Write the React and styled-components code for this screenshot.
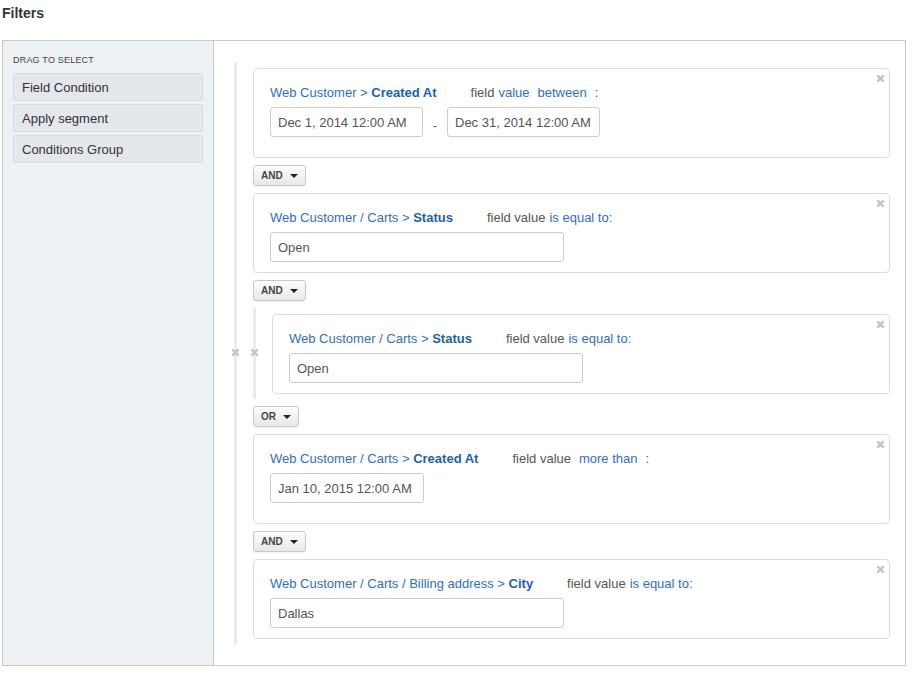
import React from "react";
import styled, { createGlobalStyle } from "styled-components";

const GlobalStyle = createGlobalStyle`
  body {
    margin: 0;
    font-family: "Liberation Sans", Arial, sans-serif;
    color: #333;
    background: #fff;
  }
`;

const Page = styled.div`
  padding: 0 8px 0 2px;
`;

const Title = styled.h3`
  margin: 0;
  padding-top: 5px;
  height: 35px;
  font-size: 14px;
  font-weight: bold;
  color: #333;
`;

const Frame = styled.div`
  display: flex;
  width: 904px;
  height: 626px;
  box-sizing: border-box;
  border: 1px solid #c8c8c8;
`;

const Sidebar = styled.div`
  width: 211px;
  flex-shrink: 0;
  background: #eef1f4;
  border-right: 1px solid #c8c8c8;
  padding: 14px 10px 0 10px;
  box-sizing: border-box;
  display: flex;
  flex-direction: column;
  gap: 3px;
`;

const SideCaption = styled.div`
  font-size: 9px;
  color: #444;
  letter-spacing: 0.2px;
  margin-bottom: 5px;
`;

const SideItem = styled.div`
  height: 28px;
  box-sizing: border-box;
  background: #e4e7eb;
  border: 1px solid #d6d9dd;
  border-radius: 3px;
  padding-left: 8px;
  display: flex;
  align-items: center;
  font-size: 13px;
  color: #333;
`;

const Main = styled.div`
  flex: 1;
  padding: 21px 15px 0 20px;
`;

const Group = styled.div`
  position: relative;
  border-left: 3px solid #ebebeb;
  padding: ${(p) => (p.nested ? "6px 0 5px 16px" : "6px 0 6px 16px")};
  display: flex;
  flex-direction: column;
`;

const Card = styled.div`
  position: relative;
  border: 1px solid #dcdcdc;
  border-radius: 4px;
  padding: 16px 16px ${(p) => (p.tall ? "20px" : "10px")} 16px;
`;

const Close = styled.span`
  position: absolute;
  display: flex;
  top: ${(p) => p.top || "5px"};
  right: ${(p) => p.right || "4px"};
  left: ${(p) => p.left || "auto"};
`;

const LabelRow = styled.div`
  display: flex;
  font-size: 13px;
  line-height: 16px;
  margin-bottom: 6px;
`;

const Path = styled.span`
  color: #2e6fc7;
  margin-right: 34px;
  b {
    color: #1b5fb5;
  }
`;

const Op = styled.span`
  color: ${(p) => (p.blue ? "#2e6fc7" : "#555")};
  margin-right: ${(p) => p.gap || "4px"};
  white-space: pre;
`;

const InputRow = styled.div`
  display: flex;
  align-items: center;
`;

const Input = styled.div`
  width: ${(p) => p.w}px;
  height: 30px;
  box-sizing: border-box;
  border: 1px solid #cdcdcd;
  border-radius: 3px;
  padding-left: 7px;
  display: flex;
  align-items: center;
  font-size: 13px;
  color: #555;
`;

const Dash = styled.span`
  width: 24px;
  text-align: center;
  font-size: 13px;
  color: #555;
  padding-top: 6px;
`;

const Joiner = styled.div`
  align-self: flex-start;
  margin: 7px 0 7px;
  height: 21px;
  box-sizing: border-box;
  padding: 0 7px 0 7px;
  display: flex;
  align-items: center;
  gap: 7px;
  border: 1px solid #c9c9c9;
  border-radius: 3px;
  background: linear-gradient(#fdfdfd, #e8e8e8);
  box-shadow: 0 1px 1px rgba(0, 0, 0, 0.06);
  font-size: 10px;
  font-weight: bold;
  color: #444;
`;

const Caret = styled.span`
  width: 0;
  height: 0;
  border-left: 4px solid transparent;
  border-right: 4px solid transparent;
  border-top: 4px solid #222;
`;

const XIcon = ({ size = 9 }) => (
  <svg width={size} height={size} viewBox="0 0 10 10">
    <path d="M1.5 1.5 L8.5 8.5 M8.5 1.5 L1.5 8.5" stroke="#c4c4c4" strokeWidth="2.6" />
  </svg>
);

const Condition = ({ path, field, ops, inputs, tall }) => (
  <Card tall={tall}>
    <Close>
      <XIcon />
    </Close>
    <LabelRow>
      <Path>
        {path}
        <b>{field}</b>
      </Path>
      {ops.map((o, i) => (
        <Op key={i} blue={o.blue} gap={o.gap}>
          {o.t}
        </Op>
      ))}
    </LabelRow>
    <InputRow>
      {inputs.map((v, i) => (
        <React.Fragment key={i}>
          {i > 0 && <Dash>-</Dash>}
          <Input w={v.w}>{v.t}</Input>
        </React.Fragment>
      ))}
    </InputRow>
  </Card>
);

const Join = ({ label }) => (
  <Joiner>
    {label}
    <Caret />
  </Joiner>
);

const equalOps = [
  { t: "field value" },
  { t: "is equal to:", blue: true },
];

export default function App() {
  return (
    <Page>
      <GlobalStyle />
      <Title>Filters</Title>
      <Frame>
        <Sidebar>
          <SideCaption>DRAG TO SELECT</SideCaption>
          <SideItem>Field Condition</SideItem>
          <SideItem>Apply segment</SideItem>
          <SideItem>Conditions Group</SideItem>
        </Sidebar>
        <Main>
          <Group>
            <Condition
              tall
              path="Web Customer > "
              field="Created At"
              ops={[
                { t: "field" },
                { t: "value", blue: true, gap: "8px" },
                { t: "between", blue: true, gap: "8px" },
                { t: ":" },
              ]}
              inputs={[
                { t: "Dec 1, 2014 12:00 AM", w: 153 },
                { t: "Dec 31, 2014 12:00 AM", w: 153 },
              ]}
            />
            <Join label="AND" />
            <Condition
              path="Web Customer / Carts > "
              field="Status"
              ops={equalOps}
              inputs={[{ t: "Open", w: 294 }]}
            />
            <Join label="AND" />
            <Group nested>
              <Close top="40px" left="-25px" right="auto">
                <XIcon />
              </Close>
              <Close top="40px" left="-6px" right="auto">
                <XIcon />
              </Close>
              <Condition
                path="Web Customer / Carts > "
                field="Status"
                ops={equalOps}
                inputs={[{ t: "Open", w: 294 }]}
              />
            </Group>
            <Join label="OR" />
            <Condition
              tall
              path="Web Customer / Carts > "
              field="Created At"
              ops={[
                { t: "field value", gap: "8px" },
                { t: "more than", blue: true, gap: "8px" },
                { t: ":" },
              ]}
              inputs={[{ t: "Jan 10, 2015 12:00 AM", w: 154 }]}
            />
            <Join label="AND" />
            <Condition
              path="Web Customer / Carts / Billing address > "
              field="City"
              ops={equalOps}
              inputs={[{ t: "Dallas", w: 294 }]}
            />
          </Group>
        </Main>
      </Frame>
    </Page>
  );
}
